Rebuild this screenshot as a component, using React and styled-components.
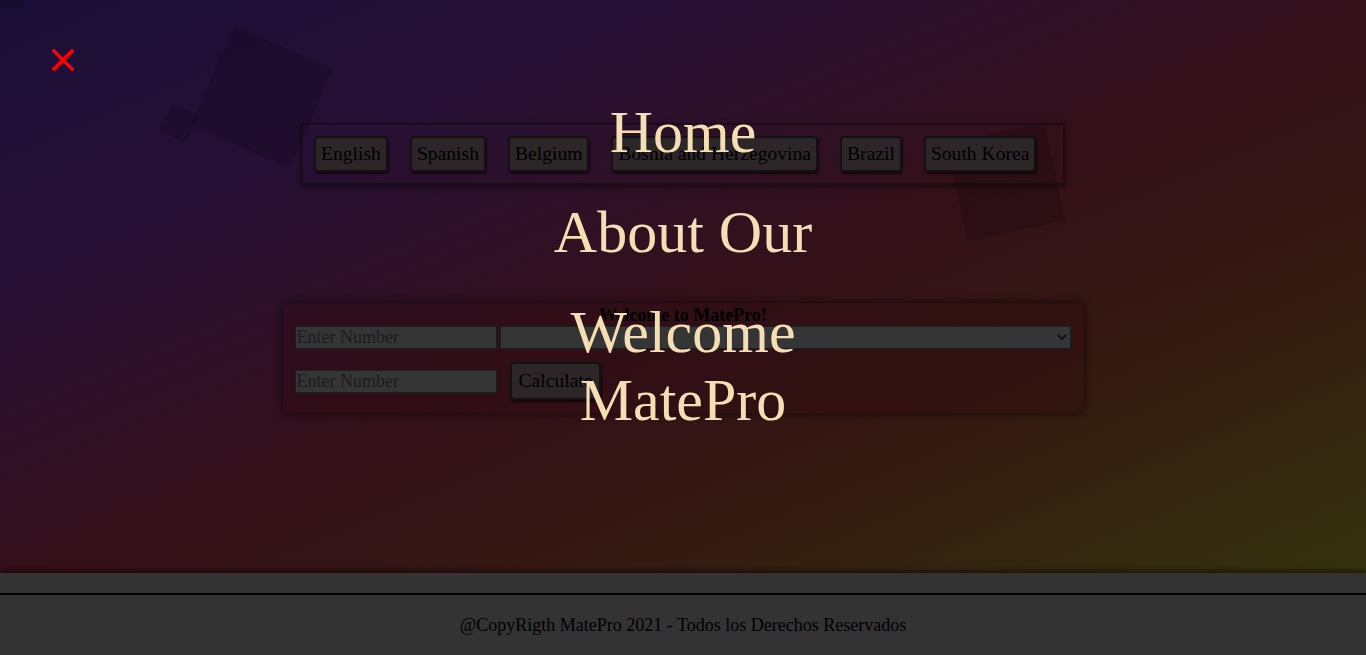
import React from "react";
import styled, { createGlobalStyle } from "styled-components";

const GlobalStyle = createGlobalStyle`
  html, body { margin: 0; padding: 0; }
  body {
    font-family: "Liberation Serif", "Times New Roman", serif;
    background: #333333;
    overflow: hidden;
  }
  * { box-sizing: border-box; }
`;

const Main = styled.main`
  position: relative;
  height: 573px;
  overflow: hidden;
  display: flex;
  flex-direction: column;
  align-items: center;
  background: linear-gradient(
    to bottom right,
    #1a0f37 0%,
    #271035 25%,
    #34101b 50%,
    #341812 70%,
    #34320d 100%
  );
`;

const Shape = styled.div`
  position: absolute;
  left: ${(p) => p.$x}px;
  top: ${(p) => p.$y}px;
  width: ${(p) => p.$size}px;
  height: ${(p) => p.$size}px;
  background: rgba(0, 0, 0, ${(p) => p.$alpha || 0.14});
  transform: translate(-50%, -50%) rotate(${(p) => p.$rot}deg);
`;

const Corner = styled.div`
  position: absolute;
  left: 0;
  top: 0;
  width: 24px;
  height: 10px;
  background: rgba(0, 0, 0, 0.12);
`;

const LangBar = styled.nav`
  position: relative;
  margin-top: 123px;
  width: 764px;
  height: 62px;
  padding-left: 11px;
  display: flex;
  align-items: center;
  gap: 22px;
  border: 2px solid rgba(15, 10, 12, 0.6);
  box-shadow: 0 2px 5px rgba(0, 0, 0, 0.55);
`;

const LangButton = styled.button`
  height: 36px;
  padding: 0 5px;
  font-family: "Liberation Serif", "Times New Roman", serif;
  font-size: 19.6px;
  color: #000;
  background: #2c2629;
  border: 2px solid #151113;
  border-radius: 4px;
  box-shadow: 1px 2px 2px rgba(0, 0, 0, 0.6);
  cursor: pointer;
`;

const Calculator = styled.section`
  position: relative;
  margin-top: 118px;
  width: 801px;
  height: 110px;
  padding: 2px 12px 13px;
  border-radius: 6px;
  background: rgba(45, 8, 14, 0.35);
  box-shadow: 0 0 8px rgba(0, 0, 0, 0.7);
  display: flex;
  flex-direction: column;
`;

const CalcTitle = styled.h3`
  margin: 0;
  height: 21px;
  line-height: 21px;
  font-size: 18px;
  font-weight: bold;
  text-align: center;
  color: #000;
`;

const Row = styled.div`
  display: flex;
  align-items: center;
  gap: ${(p) => p.$gap}px;
  margin-top: ${(p) => p.$top || 0}px;
  height: ${(p) => p.$h}px;
`;

const NumberInput = styled.input`
  width: 202px;
  height: 23px;
  padding: 0 1px;
  font-family: "Liberation Serif", "Times New Roman", serif;
  font-size: 18px;
  color: #111;
  background: #353535;
  border: 1px solid #1e1e1e;
  outline: none;
  &::placeholder { color: #1c1c1c; }
`;

const OpSelect = styled.select`
  width: 571px;
  height: 23px;
  font-family: "Liberation Serif", "Times New Roman", serif;
  font-size: 16px;
  color: #111;
  background: #353535;
  border: 1px solid #1e1e1e;
  border-radius: 0;
`;

const CalcButton = styled.button`
  height: 38px;
  padding: 0 7px;
  font-family: "Liberation Serif", "Times New Roman", serif;
  font-size: 19.6px;
  color: #000;
  background: #2c2628;
  border: 2px solid #151113;
  border-radius: 4px;
  box-shadow: 1px 2px 2px rgba(0, 0, 0, 0.6);
`;

const Footer = styled.footer`
  height: 82px;
  background: #333333;
  box-shadow: 0 -3px 5px rgba(0, 0, 0, 0.45);
  position: relative;
  display: flex;
  flex-direction: column;
`;

const FooterStrip = styled.div`
  height: 22px;
  border-bottom: 2px solid #000;
`;

const FooterText = styled.p`
  margin: 0;
  flex: 1;
  display: flex;
  align-items: center;
  justify-content: center;
  font-size: 18px;
  color: #000;
`;

const Overlay = styled.div`
  position: fixed;
  inset: 0;
  z-index: 10;
  pointer-events: none;
`;

const CloseButton = styled.button`
  position: absolute;
  left: 52px;
  top: 49px;
  width: 22px;
  height: 22px;
  padding: 0;
  border: none;
  background: transparent;
  pointer-events: auto;
  display: block;
`;

const MenuList = styled.ul`
  list-style: none;
  margin: 0 auto;
  padding: 98px 0 0;
  width: 300px;
  display: flex;
  flex-direction: column;
  gap: 32px;
  text-align: center;
`;

const MenuLink = styled.a`
  display: block;
  font-family: "Liberation Serif", "Times New Roman", serif;
  font-size: 60px;
  line-height: 68px;
  color: #f5deb3;
  text-decoration: none;
  pointer-events: auto;
`;

const languages = [
  "English",
  "Spanish",
  "Belgium",
  "Bosnia and Herzegovina",
  "Brazil",
  "South Korea",
];

export default function App() {
  return (
    <>
      <GlobalStyle />
      <Main>
        <Corner />
        <Shape $x={262} $y={97} $size={108} $rot={23.5} />
        <Shape $x={179} $y={123} $size={30} $rot={30} />
        <Shape $x={1006} $y={182} $size={100} $rot={-12} $alpha={0.16} />
        <LangBar>
          {languages.map((l) => (
            <LangButton key={l}>{l}</LangButton>
          ))}
        </LangBar>
        <Calculator>
          <CalcTitle>Welcome to MatePro!</CalcTitle>
          <Row $gap={3} $h={23}>
            <NumberInput placeholder="Enter Number" />
            <OpSelect defaultValue="">
              <option value=""></option>
              <option value="+">+</option>
              <option value="-">-</option>
              <option value="*">*</option>
              <option value="/">/</option>
            </OpSelect>
          </Row>
          <Row $gap={13} $h={38} $top={13}>
            <NumberInput placeholder="Enter Number" />
            <CalcButton>Calculate</CalcButton>
          </Row>
        </Calculator>
      </Main>
      <Footer>
        <FooterStrip />
        <FooterText>@CopyRigth MatePro 2021 - Todos los Derechos Reservados</FooterText>
      </Footer>
      <Overlay>
        <CloseButton aria-label="Close">
          <svg width="22" height="22" viewBox="0 0 22 22">
            <path d="M2 2 L20 20 M20 2 L2 20" stroke="#ff0000" strokeWidth="3.6" strokeLinecap="square" />
          </svg>
        </CloseButton>
        <MenuList>
          <li><MenuLink href="#">Home</MenuLink></li>
          <li><MenuLink href="#">About Our</MenuLink></li>
          <li><MenuLink href="#">Welcome MatePro</MenuLink></li>
        </MenuList>
      </Overlay>
    </>
  );
}
